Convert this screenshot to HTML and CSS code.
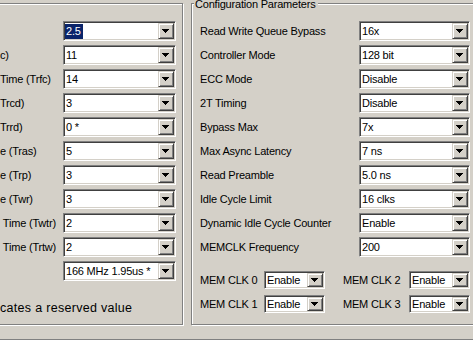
FILE: index.html
```html
<!DOCTYPE html>
<html>
<head>
<meta charset="utf-8">
<link rel="stylesheet" href="styles.css">
</head>
<body>
<div class="screen">
  <div class="panels">
    <div class="group group-left">
      <div class="rows">
        <div class="row"><span class="lbl"></span><div class="combo"><span class="val"><span class="sel">2.5</span></span><span class="btn"></span></div></div>
        <div class="row"><span class="lbl">c)</span><div class="combo"><span class="val">11</span><span class="btn"></span></div></div>
        <div class="row"><span class="lbl">Time (Trfc)</span><div class="combo"><span class="val">14</span><span class="btn"></span></div></div>
        <div class="row"><span class="lbl">Trcd)</span><div class="combo"><span class="val">3</span><span class="btn"></span></div></div>
        <div class="row"><span class="lbl">Trrd)</span><div class="combo"><span class="val">0 *</span><span class="btn"></span></div></div>
        <div class="row"><span class="lbl">e (Tras)</span><div class="combo"><span class="val">5</span><span class="btn"></span></div></div>
        <div class="row"><span class="lbl">e (Trp)</span><div class="combo"><span class="val">3</span><span class="btn"></span></div></div>
        <div class="row"><span class="lbl">e (Twr)</span><div class="combo"><span class="val">3</span><span class="btn"></span></div></div>
        <div class="row"><span class="lbl">&nbsp;Time (Twtr)</span><div class="combo"><span class="val">2</span><span class="btn"></span></div></div>
        <div class="row"><span class="lbl">&nbsp;Time (Trtw)</span><div class="combo"><span class="val">2</span><span class="btn"></span></div></div>
        <div class="row"><span class="lbl"></span><div class="combo"><span class="val">166 MHz 1.95us *</span><span class="btn"></span></div></div>
      </div>
      <div class="note">cates a reserved value</div>
    </div>
    <div class="group group-right">
      <span class="title">Configuration Parameters</span>
      <div class="rows">
        <div class="row"><span class="lbl">Read Write Queue Bypass</span><div class="combo"><span class="val">16x</span><span class="btn"></span></div></div>
        <div class="row"><span class="lbl">Controller Mode</span><div class="combo"><span class="val">128 bit</span><span class="btn"></span></div></div>
        <div class="row"><span class="lbl">ECC Mode</span><div class="combo"><span class="val">Disable</span><span class="btn"></span></div></div>
        <div class="row"><span class="lbl">2T Timing</span><div class="combo"><span class="val">Disable</span><span class="btn"></span></div></div>
        <div class="row"><span class="lbl">Bypass Max</span><div class="combo"><span class="val">7x</span><span class="btn"></span></div></div>
        <div class="row"><span class="lbl">Max Async Latency</span><div class="combo"><span class="val">7 ns</span><span class="btn"></span></div></div>
        <div class="row"><span class="lbl">Read Preamble</span><div class="combo"><span class="val">5.0 ns</span><span class="btn"></span></div></div>
        <div class="row"><span class="lbl">Idle Cycle Limit</span><div class="combo"><span class="val">16 clks</span><span class="btn"></span></div></div>
        <div class="row"><span class="lbl">Dynamic Idle Cycle Counter</span><div class="combo"><span class="val">Enable</span><span class="btn"></span></div></div>
        <div class="row"><span class="lbl">MEMCLK Frequency</span><div class="combo"><span class="val">200</span><span class="btn"></span></div></div>
      </div>
      <div class="clk-grid">
        <div class="clk"><span class="clk-lbl">MEM CLK 0</span><div class="combo combo-sm"><span class="val">Enable</span><span class="btn"></span></div></div>
        <div class="clk"><span class="clk-lbl clk-lbl-2">MEM CLK 2</span><div class="combo combo-sm"><span class="val">Enable</span><span class="btn"></span></div></div>
        <div class="clk"><span class="clk-lbl">MEM CLK 1</span><div class="combo combo-sm"><span class="val">Enable</span><span class="btn"></span></div></div>
        <div class="clk"><span class="clk-lbl clk-lbl-2">MEM CLK 3</span><div class="combo combo-sm"><span class="val">Enable</span><span class="btn"></span></div></div>
      </div>
    </div>
  </div>
  <div class="sep"></div>
</div>
</body>
</html>
```

FILE: styles.css
```css
html, body {
  margin: 0;
  padding: 0;
  background: #d4d0c8;
}

body {
  width: 473px;
  height: 341px;
  overflow: hidden;
  font-family: "Liberation Sans", Arial, sans-serif;
  font-size: 11px;
  letter-spacing: -0.2px;
  color: #000;
}

.screen {
  width: 473px;
  height: 341px;
  overflow: hidden;
}

.panels {
  display: flex;
  padding-top: 3px;
  height: 322px;
}

.group {
  position: relative;
  box-sizing: border-box;
  height: 322px;
  flex: none;
  border: 1px solid #808080;
  box-shadow: inset 1px 1px 0 #fff, 1px 1px 0 #fff;
}

.group-left {
  margin-left: -10px;
  width: 193px;
  padding: 17px 0 0 9px;
}

.group-right {
  margin-left: 8px;
  width: 300px;
  padding: 17px 0 0 8px;
}

.title {
  position: absolute;
  top: -6px;
  left: 2px;
  padding: 0 2px 0 1px;
  line-height: 12px;
  background: #d4d0c8;
  white-space: nowrap;
}

.rows {
  display: flex;
  flex-direction: column;
  gap: 4px;
}

.row {
  display: flex;
  align-items: center;
  height: 20px;
}

.group-left .lbl {
  width: 63px;
  flex: none;
  white-space: nowrap;
  overflow: hidden;
}

.group-right .lbl {
  width: 159px;
  flex: none;
  white-space: nowrap;
}

.group-left .combo {
  width: 113px;
}

.group-right .rows .combo {
  width: 111px;
}

.combo {
  box-sizing: border-box;
  height: 20px;
  display: flex;
  flex: none;
  background: #fff;
  border: 1px solid;
  border-color: #808080 #fff #fff #808080;
  box-shadow: inset 1px 1px 0 #404040, inset -1px -1px 0 #d4d0c8;
  padding: 1px;
}

.val {
  flex: 1;
  min-width: 0;
  white-space: nowrap;
  overflow: hidden;
  padding-left: 1px;
  display: flex;
  align-items: center;
}

.sel {
  background: #0a246a;
  color: #fff;
  margin-left: -1px;
  padding: 0 2px 0 1px;
  line-height: 15px;
}

.btn {
  box-sizing: border-box;
  width: 16px;
  flex: none;
  background: #d4d0c8;
  border: 1px solid;
  border-color: #d4d0c8 #404040 #404040 #d4d0c8;
  box-shadow: inset 1px 1px 0 #fff, inset -1px -1px 0 #808080;
  display: flex;
  align-items: center;
  padding-left: 3px;
}

.btn::after {
  content: "";
  display: block;
  width: 7px;
  height: 4px;
  background:
    linear-gradient(#000, #000) 0 0 / 7px 1px no-repeat,
    linear-gradient(#000, #000) 1px 1px / 5px 1px no-repeat,
    linear-gradient(#000, #000) 2px 2px / 3px 1px no-repeat,
    linear-gradient(#000, #000) 3px 3px / 1px 1px no-repeat;
}

.note {
  margin-top: 20px;
  line-height: 15px;
  white-space: nowrap;
  font-size: 12.5px;
  letter-spacing: 0.3px;
}

.clk-grid {
  display: grid;
  grid-template-columns: 143px 127px;
  row-gap: 6px;
  margin-top: 14px;
}

.clk {
  display: flex;
  align-items: center;
  height: 18px;
}

.clk-lbl {
  width: 64px;
  flex: none;
  white-space: nowrap;
}

.clk-lbl-2 {
  width: 66px;
}

.combo-sm {
  width: 61px;
  height: 18px;
}

.sep {
  margin-top: 14px;
  height: 0;
  border-top: 1px solid #808080;
  border-bottom: 1px solid #fff;
}
```
